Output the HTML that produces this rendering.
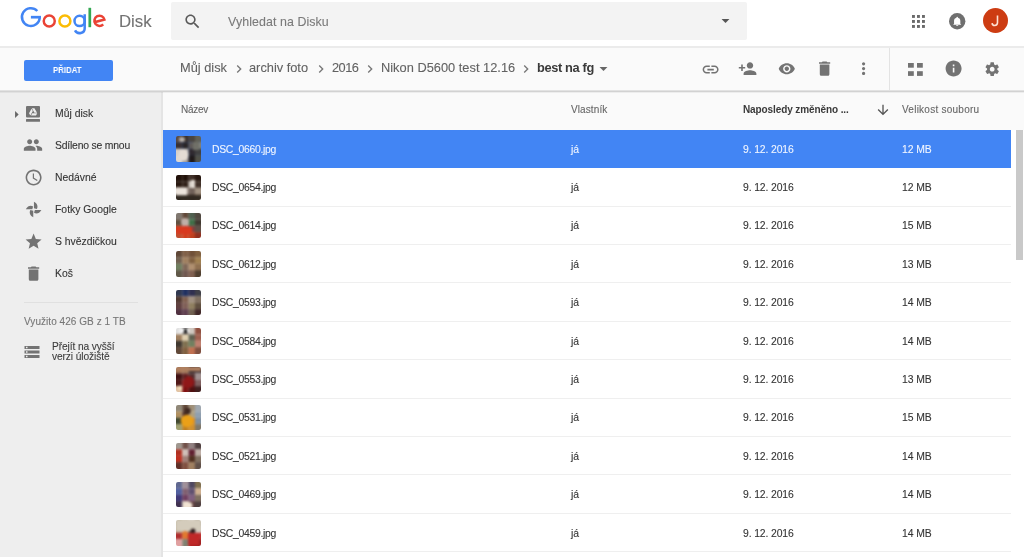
<!DOCTYPE html>
<html><head><meta charset="utf-8">
<style>
*{margin:0;padding:0;box-sizing:border-box}
html,body{width:1024px;height:557px;overflow:hidden;background:#fff;font-family:"Liberation Sans",sans-serif;-webkit-font-smoothing:antialiased}
.t{will-change:transform}
.a{position:absolute}
.t{position:absolute;white-space:nowrap;line-height:1;-webkit-text-stroke:0.1px currentColor}
svg{position:absolute;display:block;overflow:visible}
.th{position:absolute;width:25.2px;height:25.5px;border-radius:2px;overflow:hidden}
.tg{position:absolute;left:-3px;top:-3px;filter:blur(0.9px)}
</style></head><body>
<div class="a" style="left:0;top:0;width:1024px;height:46px;background:#fff"></div>
<div class="a" style="left:0;top:46px;width:1024px;height:2px;background:#ebebeb"></div>
<svg style="left:0;top:0" width="120" height="40" viewBox="0 0 120 40"><g fill="none" stroke-width="2.5"><path d="M37.3 11.0A8.9 8.9 0 1 0 39.7 17.2" stroke="#4285f4"/><path d="M30.9 17.2H41" stroke="#4285f4" stroke-width="2.7"/><circle cx="49.25" cy="20.9" r="5.5" stroke="#ea4335"/><circle cx="64.9" cy="20.9" r="5.5" stroke="#fbbc05"/><circle cx="79.6" cy="20.9" r="5.1" stroke="#4285f4"/><path d="M84.7 14.3V28.2A5.1 4.7 0 0 1 75.0 30.4" stroke="#4285f4"/><path d="M89.8 7.8V27.2" stroke="#34a853" stroke-width="2.7"/><path d="M94.4 22.2L104.4 19.5A5.1 5.1 0 1 0 103.2 24.3" stroke="#ea4335"/></g></svg>
<div class="t" style="left:118.50px;top:13.90px;font-size:16.8px;color:#737373;font-weight:normal;letter-spacing:0px;">Disk</div>

<div class="a" style="left:171px;top:2px;width:576px;height:37.5px;background:#f3f3f3;border-radius:2px"></div>
<svg style="left:183.4px;top:11.6px" width="19" height="19" viewBox="0 0 24 24"><path fill="#5a5a5a" d="M15.5 14h-.79l-.28-.27C15.41 12.59 16 11.11 16 9.5 16 5.91 13.09 3 9.5 3S3 5.91 3 9.5 5.91 16 9.5 16c1.61 0 3.09-.59 4.23-1.57l.27.28v.79l5 4.99L20.49 19l-4.99-5zm-6 0C7.01 14 5 11.99 5 9.5S7.01 5 9.5 5 14 7.01 14 9.5 11.99 14 9.5 14z"/></svg>

<div class="t" style="left:228.20px;top:15.80px;font-size:12.4px;color:#7a7a7a;font-weight:normal;letter-spacing:0.08px;">Vyhledat na Disku</div>

<svg style="left:716px;top:11px" width="19" height="19" viewBox="0 0 24 24"><path fill="#555" d="M7 10l5 5 5-5z"/></svg>

<svg style="left:912px;top:14.5px" width="13" height="13" viewBox="0 0 13 13"><g fill="#6a6a6a"><rect x="0" y="0" width="2.9" height="2.9"/><rect x="5" y="0" width="2.9" height="2.9"/><rect x="10" y="0" width="2.9" height="2.9"/><rect x="0" y="5" width="2.9" height="2.9"/><rect x="5" y="5" width="2.9" height="2.9"/><rect x="10" y="5" width="2.9" height="2.9"/><rect x="0" y="10" width="2.9" height="2.9"/><rect x="5" y="10" width="2.9" height="2.9"/><rect x="10" y="10" width="2.9" height="2.9"/></g></svg>
<svg style="left:948.8px;top:12.6px" width="16.4" height="16.4" viewBox="0 0 24 24"><circle cx="12" cy="12" r="12" fill="#6f6f6f"/><path fill="#fff" d="M12 18.8c.9 0 1.6-.6 1.6-1.4h-3.2c0 .8.7 1.4 1.6 1.4zM16.6 15.6v-4c0-2.4-1.3-4.1-3.5-4.6V6.6c0-.6-.5-1.1-1.1-1.1s-1.1.5-1.1 1.1V7c-2.2.5-3.5 2.2-3.5 4.6v4l-1.1 1.1v.5h11.4v-.5z"/></svg>
<svg style="left:982.9px;top:8.3px" width="25" height="25" viewBox="0 0 25 25"><circle cx="12.5" cy="12.5" r="12.5" fill="#cd3c12"/><path d="M14.5 7.4V14.6C14.5 16.5 13.4 17.5 11.7 17.5C10.1 17.5 9.2 16.6 9.1 15.1" fill="none" stroke="#fde2d4" stroke-width="1.6"/></svg>
<div class="a" style="left:0;top:48px;width:1024px;height:42px;background:#fafafa"></div>
<div class="a" style="left:24px;top:59.5px;width:89px;height:21px;background:#4285f4;border-radius:2px"></div>
<div class="t" style="left:52.60px;top:65.80px;font-size:9px;color:#fff;font-weight:bold;letter-spacing:0px;transform:scaleX(0.87);transform-origin:0 0;-webkit-text-stroke:0">PŘIDAT</div>

<div class="t" style="left:179.50px;top:62.40px;font-size:12.8px;color:#626262;font-weight:normal;letter-spacing:0px;">Můj disk</div>

<svg style="left:230.5px;top:61px" width="16" height="16" viewBox="0 0 24 24"><path fill="#777" d="M10 6L8.59 7.41 13.17 12l-4.58 4.59L10 18l6-6z"/></svg>

<div class="t" style="left:249.00px;top:62.40px;font-size:12.8px;color:#626262;font-weight:normal;letter-spacing:0px;">archiv foto</div>

<svg style="left:312.5px;top:61px" width="16" height="16" viewBox="0 0 24 24"><path fill="#777" d="M10 6L8.59 7.41 13.17 12l-4.58 4.59L10 18l6-6z"/></svg>

<div class="t" style="left:331.50px;top:62.40px;font-size:12.8px;color:#626262;font-weight:normal;letter-spacing:-0.5px;">2016</div>

<svg style="left:362px;top:61px" width="16" height="16" viewBox="0 0 24 24"><path fill="#777" d="M10 6L8.59 7.41 13.17 12l-4.58 4.59L10 18l6-6z"/></svg>

<div class="t" style="left:381.30px;top:62.40px;font-size:12.8px;color:#626262;font-weight:normal;letter-spacing:0.02px;">Nikon D5600 test 12.16</div>

<svg style="left:517.5px;top:61px" width="16" height="16" viewBox="0 0 24 24"><path fill="#777" d="M10 6L8.59 7.41 13.17 12l-4.58 4.59L10 18l6-6z"/></svg>

<div class="t" style="left:536.50px;top:62.40px;font-size:12.8px;color:#3a3a3a;font-weight:bold;letter-spacing:-0.35px;-webkit-text-stroke:0">best na fg</div>

<svg style="left:594px;top:59px" width="19" height="19" viewBox="0 0 24 24"><path fill="#666" d="M7 10l5 5 5-5z"/></svg>

<svg style="left:700.5px;top:59.5px" width="19.2" height="19.2" viewBox="0 0 24 24"><path fill="#737373" d="M3.9 12c0-1.71 1.39-3.1 3.1-3.1h4V7H7c-2.76 0-5 2.24-5 5s2.24 5 5 5h4v-1.9H7c-1.71 0-3.1-1.39-3.1-3.1zM8 13h8v-2H8v2zm9-6h-4v1.9h4c1.71 0 3.1 1.39 3.1 3.1s-1.39 3.1-3.1 3.1h-4V17h4c2.76 0 5-2.24 5-5s-2.24-5-5-5z"/></svg>

<svg style="left:737.6px;top:58.9px" width="19.2" height="19.2" viewBox="0 0 24 24"><path fill="#737373" d="M15 12c2.21 0 4-1.79 4-4s-1.79-4-4-4-4 1.79-4 4 1.79 4 4 4zm-9-2V7H4v3H1v2h3v3h2v-3h3v-2H6zm9 4c-2.67 0-8 1.34-8 4v2h16v-2c0-2.66-5.33-4-8-4z"/></svg>

<svg style="left:777.6px;top:59.9px" width="17.6" height="17.6" viewBox="0 0 24 24"><path fill="#737373" d="M12 4.5C7 4.5 2.73 7.61 1 12c1.73 4.39 6 7.5 11 7.5s9.27-3.11 11-7.5c-1.73-4.39-6-7.5-11-7.5zM12 17c-2.76 0-5-2.24-5-5s2.24-5 5-5 5 2.24 5 5-2.24 5-5 5zm0-8c-1.66 0-3 1.34-3 3s1.34 3 3 3 3-1.34 3-3-1.34-3-3-3z"/></svg>

<svg style="left:815px;top:58.9px" width="19.2" height="19.2" viewBox="0 0 24 24"><path fill="#737373" d="M6 19c0 1.1.9 2 2 2h8c1.1 0 2-.9 2-2V7H6v12zM19 4h-3.5l-1-1h-5l-1 1H5v2h14V4z"/></svg>

<svg style="left:854px;top:59px" width="19.2" height="19.2" viewBox="0 0 24 24"><path fill="#737373" d="M12 8c1.1 0 2-.9 2-2s-.9-2-2-2-2 .9-2 2 .9 2 2 2zm0 2c-1.1 0-2 .9-2 2s.9 2 2 2 2-.9 2-2-.9-2-2-2zm0 6c-1.1 0-2 .9-2 2s.9 2 2 2 2-.9 2-2-.9-2-2-2z"/></svg>

<div class="a" style="left:889px;top:48px;width:1px;height:41.5px;background:#e3e3e3"></div>
<svg style="left:908px;top:62.5px" width="15" height="13" viewBox="0 0 15 13"><g fill="#737373"><rect x="0" y="0" width="5.8" height="4.7"/><rect x="9" y="0" width="5.8" height="4.7"/><rect x="0" y="8.2" width="5.8" height="4.7"/><rect x="9" y="8.2" width="5.8" height="4.7"/></g></svg>
<svg style="left:944px;top:59px" width="19.2" height="19.2" viewBox="0 0 24 24"><path fill="#737373" d="M12 2C6.48 2 2 6.48 2 12s4.48 10 10 10 10-4.48 10-10S17.52 2 12 2zm1 15h-2v-6h2v6zm0-8h-2V7h2v2z"/></svg>

<svg style="left:984px;top:60.5px" width="16.4" height="16.4" viewBox="0 0 24 24"><path fill="#737373" d="M19.43 12.98c.04-.32.07-.64.07-.98s-.03-.66-.07-.98l2.11-1.65c.19-.15.24-.42.12-.64l-2-3.46c-.12-.22-.39-.3-.61-.22l-2.49 1c-.52-.4-1.08-.73-1.69-.98l-.38-2.65C14.46 2.18 14.25 2 14 2h-4c-.25 0-.46.18-.49.42l-.38 2.65c-.61.25-1.17.59-1.69.98l-2.49-1c-.23-.09-.49 0-.61.22l-2 3.46c-.13.22-.07.49.12.64l2.11 1.65c-.04.32-.07.65-.07.98s.03.66.07.98l-2.11 1.65c-.19.15-.24.42-.12.64l2 3.46c.12.22.39.3.61.22l2.49-1c.52.4 1.08.73 1.69.98l.38 2.65c.03.24.24.42.49.42h4c.25 0 .46-.18.49-.42l.38-2.65c.61-.25 1.17-.59 1.69-.98l2.49 1c.23.09.49 0 .61-.22l2-3.46c.12-.22.07-.49-.12-.64l-2.11-1.65zM12 15.5c-1.93 0-3.5-1.57-3.5-3.5s1.57-3.5 3.5-3.5 3.5 1.57 3.5 3.5-1.57 3.5-3.5 3.5z"/></svg>

<div class="a" style="left:0;top:90px;width:162px;height:467px;background:#eeeeee"></div>
<div class="a" style="left:162px;top:90px;width:862px;height:467px;background:#fff"></div>
<div class="a" style="left:162px;top:90px;width:862px;height:40px;background:#fafafa"></div>
<div class="a" style="left:161px;top:90px;width:1.5px;height:467px;background:#e4e4e4"></div>
<div class="a" style="left:0;top:90px;width:1024px;height:1px;background:#e2e2e2"></div>
<div class="a" style="left:0;top:91px;width:1024px;height:1px;background:#d2d2d2"></div>
<div class="a" style="left:0;top:92px;width:1024px;height:1px;background:rgba(0,0,0,0.05)"></div>
<svg style="left:7.5px;top:105.5px" width="17" height="17" viewBox="0 0 24 24"><path fill="#666" d="M10 17l5-5-5-5v10z"/></svg>

<svg style="left:26px;top:105.8px" width="14" height="16" viewBox="0 0 14 16"><rect x="0" y="0" width="14" height="11.6" rx="1" fill="#737373"/><rect x="0" y="13.1" width="14" height="2.6" rx="0.5" fill="#737373"/><path fill="#eee" transform="translate(2.6 1.5) scale(0.38)" d="M7.71,3.5L1.15,15L4.58,21L11.13,9.5M9.73,15L6.3,21H19.42L22.85,15M22.28,14L15.42,2H8.58L8.57,2L15.43,14H22.28Z"/></svg>
<div class="t" style="left:54.50px;top:108.80px;font-size:10.4px;color:#333;font-weight:normal;letter-spacing:0px;">Můj disk</div>

<svg style="left:22.8px;top:135px" width="20" height="20" viewBox="0 0 24 24"><path fill="#737373" d="M16 11c1.66 0 2.99-1.34 2.99-3S17.66 5 16 5c-1.66 0-3 1.34-3 3s1.34 3 3 3zm-8 0c1.66 0 2.99-1.34 2.99-3S9.66 5 8 5C6.34 5 5 6.34 5 8s1.34 3 3 3zm0 2c-2.33 0-7 1.17-7 3.5V19h14v-2.5c0-2.33-4.67-3.5-7-3.5zm8 0c-.29 0-.62.02-.97.05 1.16.84 1.97 1.97 1.97 3.45V19h6v-2.5c0-2.33-4.67-3.5-7-3.5z"/></svg>

<div class="t" style="left:54.50px;top:140.80px;font-size:10.4px;color:#333;font-weight:normal;letter-spacing:-0.2px;">Sdíleno se mnou</div>

<svg style="left:23.5px;top:167.5px" width="19.2" height="19.2" viewBox="0 0 24 24"><path fill="#737373" d="M11.99 2C6.47 2 2 6.48 2 12s4.47 10 9.99 10C17.52 22 22 17.52 22 12S17.52 2 11.99 2zM12 20c-4.42 0-8-3.58-8-8s3.58-8 8-8 8 3.58 8 8-3.58 8-8 8zm.5-13H11v6l5.25 3.15.75-1.23-4.5-2.67z"/></svg>

<div class="t" style="left:54.50px;top:172.80px;font-size:10.4px;color:#333;font-weight:normal;letter-spacing:0px;">Nedávné</div>

<svg style="left:23.5px;top:199.5px" width="19.2" height="19.2" viewBox="0 0 24 24"><g fill="#737373"><path id="pb" d="M12.4 2.3V10.4L16 11.4C17.7 8.6 17 4.6 12.4 2.3Z"/><use href="#pb" transform="rotate(90 12 12)"/><use href="#pb" transform="rotate(180 12 12)"/><use href="#pb" transform="rotate(270 12 12)"/></g></svg>

<div class="t" style="left:54.50px;top:204.80px;font-size:10.4px;color:#333;font-weight:normal;letter-spacing:0px;">Fotky Google</div>

<svg style="left:23.5px;top:231.5px" width="19.2" height="19.2" viewBox="0 0 24 24"><path fill="#737373" d="M12 17.27L18.18 21l-1.64-7.03L22 9.24l-7.19-.61L12 2 9.19 8.63 2 9.24l5.46 4.73L5.82 21z"/></svg>

<div class="t" style="left:54.50px;top:236.80px;font-size:10.4px;color:#333;font-weight:normal;letter-spacing:0px;">S hvězdičkou</div>

<svg style="left:23.5px;top:263.5px" width="19.2" height="19.2" viewBox="0 0 24 24"><path fill="#737373" d="M6 19c0 1.1.9 2 2 2h8c1.1 0 2-.9 2-2V7H6v12zM19 4h-3.5l-1-1h-5l-1 1H5v2h14V4z"/></svg>

<div class="t" style="left:54.50px;top:268.80px;font-size:10.4px;color:#333;font-weight:normal;letter-spacing:0px;">Koš</div>

<div class="a" style="left:23.5px;top:302px;width:114px;height:1px;background:#e0e0e0"></div>
<div class="t" style="left:23.50px;top:317.20px;font-size:10px;color:#767676;font-weight:normal;letter-spacing:0.05px;">Využito 426 GB z 1 TB</div>

<svg style="left:23.3px;top:343px" width="18" height="18" viewBox="0 0 24 24"><path fill="#737373" d="M2 20h20v-4H2v4zm2-3h2v2H4v-2zM2 4v4h20V4H2zm4 3H4V5h2v2zm-4 7h20v-4H2v4zm2-3h2v2H4v-2z"/></svg>

<div class="t" style="left:51.70px;top:341.50px;font-size:10.2px;color:#3c3c3c;font-weight:normal;letter-spacing:-0.1px;">Přejít na vyšší</div>

<div class="t" style="left:51.70px;top:351.50px;font-size:10.2px;color:#3c3c3c;font-weight:normal;letter-spacing:-0.1px;">verzi úložiště</div>

<div class="t" style="left:180.60px;top:104.60px;font-size:10px;color:#666;font-weight:normal;letter-spacing:-0.3px;">Název</div>

<div class="t" style="left:570.50px;top:104.60px;font-size:10px;color:#666;font-weight:normal;letter-spacing:0.1px;">Vlastník</div>

<div class="t" style="left:742.70px;top:104.60px;font-size:10px;color:#3a3a3a;font-weight:bold;letter-spacing:-0.1px;-webkit-text-stroke:0">Naposledy změněno ...</div>

<svg style="left:874.5px;top:101.5px" width="16" height="16" viewBox="0 0 24 24"><path fill="#555" d="M20 12l-1.41-1.41L13 16.17V4h-2v12.17l-5.58-5.59L4 12l8 8 8-8z"/></svg>

<div class="t" style="left:902.00px;top:104.60px;font-size:10px;color:#666;font-weight:normal;letter-spacing:0.25px;">Velikost souboru</div>

<div class="a" style="left:163px;top:129.70px;width:848px;height:38.4px;background:#4285f4"></div>
<div class="th" style="left:175.70px;top:136.10px"><svg class="tg" width="31.2" height="31.5" viewBox="0 0 31.2 31.5"><rect x="0.00" y="0.00" width="9.40" height="9.47" fill="#5a4a40"/><rect x="9.30" y="0.00" width="6.40" height="9.47" fill="#3a302a"/><rect x="15.60" y="0.00" width="6.40" height="9.47" fill="#4a4540"/><rect x="21.90" y="0.00" width="9.40" height="9.47" fill="#606058"/><rect x="0.00" y="9.38" width="9.40" height="6.47" fill="#3a3030"/><rect x="9.30" y="9.38" width="6.40" height="6.47" fill="#2a2525"/><rect x="15.60" y="9.38" width="6.40" height="6.47" fill="#605a58"/><rect x="21.90" y="9.38" width="9.40" height="6.47" fill="#808078"/><rect x="0.00" y="15.75" width="9.40" height="6.47" fill="#d8d0c8"/><rect x="9.30" y="15.75" width="6.40" height="6.47" fill="#c0b8b0"/><rect x="15.60" y="15.75" width="6.40" height="6.47" fill="#302a30"/><rect x="21.90" y="15.75" width="9.40" height="6.47" fill="#404040"/><rect x="0.00" y="22.12" width="9.40" height="9.47" fill="#e0d8d0"/><rect x="9.30" y="22.12" width="6.40" height="9.47" fill="#a09890"/><rect x="15.60" y="22.12" width="6.40" height="9.47" fill="#201a1a"/><rect x="21.90" y="22.12" width="9.40" height="9.47" fill="#505048"/><g transform="translate(3 3)"><ellipse cx="7.5" cy="19" rx="5" ry="6" fill="#e4dcd4"/><ellipse cx="6" cy="3.5" rx="3" ry="2.5" fill="#b8b0a8"/><rect x="17" y="6" width="6" height="8" fill="#707068"/></g></svg></div>
<div class="t" style="left:212.00px;top:144.50px;font-size:10.4px;color:#f0f5ff;font-weight:normal;letter-spacing:-0.3px;">DSC_0660.jpg</div>

<div class="t" style="left:570.50px;top:144.50px;font-size:10.4px;color:#f0f5ff;font-weight:normal;letter-spacing:0px;">já</div>

<div class="t" style="left:742.70px;top:144.50px;font-size:10.4px;color:#f0f5ff;font-weight:normal;letter-spacing:-0.12px;">9. 12. 2016</div>

<div class="t" style="left:902.30px;top:144.50px;font-size:10.4px;color:#f0f5ff;font-weight:normal;letter-spacing:-0.1px;">12 MB</div>

<div class="a" style="left:163px;top:206px;width:848px;height:1px;background:#efefef"></div>
<div class="th" style="left:175.70px;top:174.50px"><svg class="tg" width="31.2" height="31.5" viewBox="0 0 31.2 31.5"><rect x="0.00" y="0.00" width="9.40" height="9.47" fill="#201008"/><rect x="9.30" y="0.00" width="6.40" height="9.47" fill="#201008"/><rect x="15.60" y="0.00" width="6.40" height="9.47" fill="#403028"/><rect x="21.90" y="0.00" width="9.40" height="9.47" fill="#281810"/><rect x="0.00" y="9.38" width="9.40" height="6.47" fill="#281810"/><rect x="9.30" y="9.38" width="6.40" height="6.47" fill="#302018"/><rect x="15.60" y="9.38" width="6.40" height="6.47" fill="#d0c8c0"/><rect x="21.90" y="9.38" width="9.40" height="6.47" fill="#403028"/><rect x="0.00" y="15.75" width="9.40" height="6.47" fill="#e8e0d8"/><rect x="9.30" y="15.75" width="6.40" height="6.47" fill="#a09088"/><rect x="15.60" y="15.75" width="6.40" height="6.47" fill="#706058"/><rect x="21.90" y="15.75" width="9.40" height="6.47" fill="#a09080"/><rect x="0.00" y="22.12" width="9.40" height="9.47" fill="#302820"/><rect x="9.30" y="22.12" width="6.40" height="9.47" fill="#504038"/><rect x="15.60" y="22.12" width="6.40" height="9.47" fill="#403028"/><rect x="21.90" y="22.12" width="9.40" height="9.47" fill="#605040"/><g transform="translate(3 3)"><rect x="0" y="12.5" width="11" height="8" fill="#ece4dc"/><rect x="15" y="5" width="4" height="8" fill="#e4dcd4"/><rect x="0" y="20.5" width="25" height="5" fill="#302820"/></g></svg></div>
<div class="t" style="left:212.00px;top:182.90px;font-size:10.4px;color:#333;font-weight:normal;letter-spacing:-0.3px;">DSC_0654.jpg</div>

<div class="t" style="left:570.50px;top:182.90px;font-size:10.4px;color:#333;font-weight:normal;letter-spacing:0px;">já</div>

<div class="t" style="left:742.70px;top:182.90px;font-size:10.4px;color:#333;font-weight:normal;letter-spacing:-0.12px;">9. 12. 2016</div>

<div class="t" style="left:902.30px;top:182.90px;font-size:10.4px;color:#333;font-weight:normal;letter-spacing:-0.1px;">12 MB</div>

<div class="a" style="left:163px;top:244px;width:848px;height:1px;background:#efefef"></div>
<div class="th" style="left:175.70px;top:212.90px"><svg class="tg" width="31.2" height="31.5" viewBox="0 0 31.2 31.5"><rect x="0.00" y="0.00" width="9.40" height="9.47" fill="#807870"/><rect x="9.30" y="0.00" width="6.40" height="9.47" fill="#604838"/><rect x="15.60" y="0.00" width="6.40" height="9.47" fill="#506050"/><rect x="21.90" y="0.00" width="9.40" height="9.47" fill="#504840"/><rect x="0.00" y="9.38" width="9.40" height="6.47" fill="#605040"/><rect x="9.30" y="9.38" width="6.40" height="6.47" fill="#b0a098"/><rect x="15.60" y="9.38" width="6.40" height="6.47" fill="#407048"/><rect x="21.90" y="9.38" width="9.40" height="6.47" fill="#403830"/><rect x="0.00" y="15.75" width="9.40" height="6.47" fill="#d04020"/><rect x="9.30" y="15.75" width="6.40" height="6.47" fill="#d03020"/><rect x="15.60" y="15.75" width="6.40" height="6.47" fill="#804040"/><rect x="21.90" y="15.75" width="9.40" height="6.47" fill="#605048"/><rect x="0.00" y="22.12" width="9.40" height="9.47" fill="#c05030"/><rect x="9.30" y="22.12" width="6.40" height="9.47" fill="#d04020"/><rect x="15.60" y="22.12" width="6.40" height="9.47" fill="#c04020"/><rect x="21.90" y="22.12" width="9.40" height="9.47" fill="#903020"/><g transform="translate(3 3)"><ellipse cx="9" cy="9" rx="4" ry="4" fill="#c0b0a8"/><rect x="0" y="14" width="16" height="7" fill="#d83a20"/></g></svg></div>
<div class="t" style="left:212.00px;top:221.30px;font-size:10.4px;color:#333;font-weight:normal;letter-spacing:-0.3px;">DSC_0614.jpg</div>

<div class="t" style="left:570.50px;top:221.30px;font-size:10.4px;color:#333;font-weight:normal;letter-spacing:0px;">já</div>

<div class="t" style="left:742.70px;top:221.30px;font-size:10.4px;color:#333;font-weight:normal;letter-spacing:-0.12px;">9. 12. 2016</div>

<div class="t" style="left:902.30px;top:221.30px;font-size:10.4px;color:#333;font-weight:normal;letter-spacing:-0.1px;">15 MB</div>

<div class="a" style="left:163px;top:282px;width:848px;height:1px;background:#efefef"></div>
<div class="th" style="left:175.70px;top:251.30px"><svg class="tg" width="31.2" height="31.5" viewBox="0 0 31.2 31.5"><rect x="0.00" y="0.00" width="9.40" height="9.47" fill="#604838"/><rect x="9.30" y="0.00" width="6.40" height="9.47" fill="#806048"/><rect x="15.60" y="0.00" width="6.40" height="9.47" fill="#705038"/><rect x="21.90" y="0.00" width="9.40" height="9.47" fill="#806040"/><rect x="0.00" y="9.38" width="9.40" height="6.47" fill="#706050"/><rect x="9.30" y="9.38" width="6.40" height="6.47" fill="#a08060"/><rect x="15.60" y="9.38" width="6.40" height="6.47" fill="#806040"/><rect x="21.90" y="9.38" width="9.40" height="6.47" fill="#a08050"/><rect x="0.00" y="15.75" width="9.40" height="6.47" fill="#708060"/><rect x="9.30" y="15.75" width="6.40" height="6.47" fill="#806858"/><rect x="15.60" y="15.75" width="6.40" height="6.47" fill="#b09070"/><rect x="21.90" y="15.75" width="9.40" height="6.47" fill="#907050"/><rect x="0.00" y="22.12" width="9.40" height="9.47" fill="#605848"/><rect x="9.30" y="22.12" width="6.40" height="9.47" fill="#705850"/><rect x="15.60" y="22.12" width="6.40" height="9.47" fill="#806050"/><rect x="21.90" y="22.12" width="9.40" height="9.47" fill="#504030"/><g transform="translate(3 3)"></g></svg></div>
<div class="t" style="left:212.00px;top:259.70px;font-size:10.4px;color:#333;font-weight:normal;letter-spacing:-0.3px;">DSC_0612.jpg</div>

<div class="t" style="left:570.50px;top:259.70px;font-size:10.4px;color:#333;font-weight:normal;letter-spacing:0px;">já</div>

<div class="t" style="left:742.70px;top:259.70px;font-size:10.4px;color:#333;font-weight:normal;letter-spacing:-0.12px;">9. 12. 2016</div>

<div class="t" style="left:902.30px;top:259.70px;font-size:10.4px;color:#333;font-weight:normal;letter-spacing:-0.1px;">13 MB</div>

<div class="a" style="left:163px;top:321px;width:848px;height:1px;background:#efefef"></div>
<div class="th" style="left:175.70px;top:289.70px"><svg class="tg" width="31.2" height="31.5" viewBox="0 0 31.2 31.5"><rect x="0.00" y="0.00" width="9.40" height="9.47" fill="#303850"/><rect x="9.30" y="0.00" width="6.40" height="9.47" fill="#203060"/><rect x="15.60" y="0.00" width="6.40" height="9.47" fill="#303050"/><rect x="21.90" y="0.00" width="9.40" height="9.47" fill="#404048"/><rect x="0.00" y="9.38" width="9.40" height="6.47" fill="#503830"/><rect x="9.30" y="9.38" width="6.40" height="6.47" fill="#806050"/><rect x="15.60" y="9.38" width="6.40" height="6.47" fill="#a09080"/><rect x="21.90" y="9.38" width="9.40" height="6.47" fill="#807060"/><rect x="0.00" y="15.75" width="9.40" height="6.47" fill="#604040"/><rect x="9.30" y="15.75" width="6.40" height="6.47" fill="#806058"/><rect x="15.60" y="15.75" width="6.40" height="6.47" fill="#908060"/><rect x="21.90" y="15.75" width="9.40" height="6.47" fill="#605040"/><rect x="0.00" y="22.12" width="9.40" height="9.47" fill="#503040"/><rect x="9.30" y="22.12" width="6.40" height="9.47" fill="#604050"/><rect x="15.60" y="22.12" width="6.40" height="9.47" fill="#706050"/><rect x="21.90" y="22.12" width="9.40" height="9.47" fill="#402828"/><g transform="translate(3 3)"></g></svg></div>
<div class="t" style="left:212.00px;top:298.10px;font-size:10.4px;color:#333;font-weight:normal;letter-spacing:-0.3px;">DSC_0593.jpg</div>

<div class="t" style="left:570.50px;top:298.10px;font-size:10.4px;color:#333;font-weight:normal;letter-spacing:0px;">já</div>

<div class="t" style="left:742.70px;top:298.10px;font-size:10.4px;color:#333;font-weight:normal;letter-spacing:-0.12px;">9. 12. 2016</div>

<div class="t" style="left:902.30px;top:298.10px;font-size:10.4px;color:#333;font-weight:normal;letter-spacing:-0.1px;">14 MB</div>

<div class="a" style="left:163px;top:359px;width:848px;height:1px;background:#efefef"></div>
<div class="th" style="left:175.70px;top:328.10px"><svg class="tg" width="31.2" height="31.5" viewBox="0 0 31.2 31.5"><rect x="0.00" y="0.00" width="9.40" height="9.47" fill="#e0e0e0"/><rect x="9.30" y="0.00" width="6.40" height="9.47" fill="#302828"/><rect x="15.60" y="0.00" width="6.40" height="9.47" fill="#d0c8c0"/><rect x="21.90" y="0.00" width="9.40" height="9.47" fill="#905040"/><rect x="0.00" y="9.38" width="9.40" height="6.47" fill="#a08060"/><rect x="9.30" y="9.38" width="6.40" height="6.47" fill="#e0d0b0"/><rect x="15.60" y="9.38" width="6.40" height="6.47" fill="#606050"/><rect x="21.90" y="9.38" width="9.40" height="6.47" fill="#a06050"/><rect x="0.00" y="15.75" width="9.40" height="6.47" fill="#403830"/><rect x="9.30" y="15.75" width="6.40" height="6.47" fill="#807050"/><rect x="15.60" y="15.75" width="6.40" height="6.47" fill="#708060"/><rect x="21.90" y="15.75" width="9.40" height="6.47" fill="#c08070"/><rect x="0.00" y="22.12" width="9.40" height="9.47" fill="#604838"/><rect x="9.30" y="22.12" width="6.40" height="9.47" fill="#806040"/><rect x="15.60" y="22.12" width="6.40" height="9.47" fill="#c07050"/><rect x="21.90" y="22.12" width="9.40" height="9.47" fill="#805040"/><g transform="translate(3 3)"><rect x="3" y="0" width="10" height="5" fill="#f0f0f0"/><rect x="8" y="1" width="3" height="4" fill="#202020"/></g></svg></div>
<div class="t" style="left:212.00px;top:336.50px;font-size:10.4px;color:#333;font-weight:normal;letter-spacing:-0.3px;">DSC_0584.jpg</div>

<div class="t" style="left:570.50px;top:336.50px;font-size:10.4px;color:#333;font-weight:normal;letter-spacing:0px;">já</div>

<div class="t" style="left:742.70px;top:336.50px;font-size:10.4px;color:#333;font-weight:normal;letter-spacing:-0.12px;">9. 12. 2016</div>

<div class="t" style="left:902.30px;top:336.50px;font-size:10.4px;color:#333;font-weight:normal;letter-spacing:-0.1px;">14 MB</div>

<div class="a" style="left:163px;top:398px;width:848px;height:1px;background:#efefef"></div>
<div class="th" style="left:175.70px;top:366.50px"><svg class="tg" width="31.2" height="31.5" viewBox="0 0 31.2 31.5"><rect x="0.00" y="0.00" width="9.40" height="9.47" fill="#a07050"/><rect x="9.30" y="0.00" width="6.40" height="9.47" fill="#a07858"/><rect x="15.60" y="0.00" width="6.40" height="9.47" fill="#403030"/><rect x="21.90" y="0.00" width="9.40" height="9.47" fill="#504040"/><rect x="0.00" y="9.38" width="9.40" height="6.47" fill="#401010"/><rect x="9.30" y="9.38" width="6.40" height="6.47" fill="#602020"/><rect x="15.60" y="9.38" width="6.40" height="6.47" fill="#503030"/><rect x="21.90" y="9.38" width="9.40" height="6.47" fill="#a09090"/><rect x="0.00" y="15.75" width="9.40" height="6.47" fill="#501818"/><rect x="9.30" y="15.75" width="6.40" height="6.47" fill="#901818"/><rect x="15.60" y="15.75" width="6.40" height="6.47" fill="#601820"/><rect x="21.90" y="15.75" width="9.40" height="6.47" fill="#806060"/><rect x="0.00" y="22.12" width="9.40" height="9.47" fill="#e0c0a0"/><rect x="9.30" y="22.12" width="6.40" height="9.47" fill="#801010"/><rect x="15.60" y="22.12" width="6.40" height="9.47" fill="#501010"/><rect x="21.90" y="22.12" width="9.40" height="9.47" fill="#402020"/><g transform="translate(3 3)"><rect x="0" y="0" width="25" height="4" fill="#b08060"/><circle cx="4" cy="21" r="2.4" fill="#f4dcb8"/><ellipse cx="13" cy="15" rx="5" ry="6" fill="#901818"/></g></svg></div>
<div class="t" style="left:212.00px;top:374.90px;font-size:10.4px;color:#333;font-weight:normal;letter-spacing:-0.3px;">DSC_0553.jpg</div>

<div class="t" style="left:570.50px;top:374.90px;font-size:10.4px;color:#333;font-weight:normal;letter-spacing:0px;">já</div>

<div class="t" style="left:742.70px;top:374.90px;font-size:10.4px;color:#333;font-weight:normal;letter-spacing:-0.12px;">9. 12. 2016</div>

<div class="t" style="left:902.30px;top:374.90px;font-size:10.4px;color:#333;font-weight:normal;letter-spacing:-0.1px;">13 MB</div>

<div class="a" style="left:163px;top:436px;width:848px;height:1px;background:#efefef"></div>
<div class="th" style="left:175.70px;top:404.90px"><svg class="tg" width="31.2" height="31.5" viewBox="0 0 31.2 31.5"><rect x="0.00" y="0.00" width="9.40" height="9.47" fill="#908878"/><rect x="9.30" y="0.00" width="6.40" height="9.47" fill="#604838"/><rect x="15.60" y="0.00" width="6.40" height="9.47" fill="#a09078"/><rect x="21.90" y="0.00" width="9.40" height="9.47" fill="#a0a8b0"/><rect x="0.00" y="9.38" width="9.40" height="6.47" fill="#b09060"/><rect x="9.30" y="9.38" width="6.40" height="6.47" fill="#503028"/><rect x="15.60" y="9.38" width="6.40" height="6.47" fill="#b0a080"/><rect x="21.90" y="9.38" width="9.40" height="6.47" fill="#90a0b0"/><rect x="0.00" y="15.75" width="9.40" height="6.47" fill="#404830"/><rect x="9.30" y="15.75" width="6.40" height="6.47" fill="#e0a020"/><rect x="15.60" y="15.75" width="6.40" height="6.47" fill="#e09020"/><rect x="21.90" y="15.75" width="9.40" height="6.47" fill="#8090a0"/><rect x="0.00" y="22.12" width="9.40" height="9.47" fill="#a0a070"/><rect x="9.30" y="22.12" width="6.40" height="9.47" fill="#c08020"/><rect x="15.60" y="22.12" width="6.40" height="9.47" fill="#d09030"/><rect x="21.90" y="22.12" width="9.40" height="9.47" fill="#807868"/><g transform="translate(3 3)"><circle cx="11" cy="16" r="6.2" fill="#eaa018"/><circle cx="11.5" cy="6" r="3.2" fill="#402820"/></g></svg></div>
<div class="t" style="left:212.00px;top:413.30px;font-size:10.4px;color:#333;font-weight:normal;letter-spacing:-0.3px;">DSC_0531.jpg</div>

<div class="t" style="left:570.50px;top:413.30px;font-size:10.4px;color:#333;font-weight:normal;letter-spacing:0px;">já</div>

<div class="t" style="left:742.70px;top:413.30px;font-size:10.4px;color:#333;font-weight:normal;letter-spacing:-0.12px;">9. 12. 2016</div>

<div class="t" style="left:902.30px;top:413.30px;font-size:10.4px;color:#333;font-weight:normal;letter-spacing:-0.1px;">15 MB</div>

<div class="a" style="left:163px;top:474px;width:848px;height:1px;background:#efefef"></div>
<div class="th" style="left:175.70px;top:443.30px"><svg class="tg" width="31.2" height="31.5" viewBox="0 0 31.2 31.5"><rect x="0.00" y="0.00" width="9.40" height="9.47" fill="#a09890"/><rect x="9.30" y="0.00" width="6.40" height="9.47" fill="#705048"/><rect x="15.60" y="0.00" width="6.40" height="9.47" fill="#908080"/><rect x="21.90" y="0.00" width="9.40" height="9.47" fill="#504040"/><rect x="0.00" y="9.38" width="9.40" height="6.47" fill="#b03020"/><rect x="9.30" y="9.38" width="6.40" height="6.47" fill="#d0c0b8"/><rect x="15.60" y="9.38" width="6.40" height="6.47" fill="#602030"/><rect x="21.90" y="9.38" width="9.40" height="6.47" fill="#c0b0a8"/><rect x="0.00" y="15.75" width="9.40" height="6.47" fill="#c03020"/><rect x="9.30" y="15.75" width="6.40" height="6.47" fill="#a08078"/><rect x="15.60" y="15.75" width="6.40" height="6.47" fill="#503020"/><rect x="21.90" y="15.75" width="9.40" height="6.47" fill="#807060"/><rect x="0.00" y="22.12" width="9.40" height="9.47" fill="#603028"/><rect x="9.30" y="22.12" width="6.40" height="9.47" fill="#805040"/><rect x="15.60" y="22.12" width="6.40" height="9.47" fill="#a08060"/><rect x="21.90" y="22.12" width="9.40" height="9.47" fill="#605048"/><g transform="translate(3 3)"></g></svg></div>
<div class="t" style="left:212.00px;top:451.70px;font-size:10.4px;color:#333;font-weight:normal;letter-spacing:-0.3px;">DSC_0521.jpg</div>

<div class="t" style="left:570.50px;top:451.70px;font-size:10.4px;color:#333;font-weight:normal;letter-spacing:0px;">já</div>

<div class="t" style="left:742.70px;top:451.70px;font-size:10.4px;color:#333;font-weight:normal;letter-spacing:-0.12px;">9. 12. 2016</div>

<div class="t" style="left:902.30px;top:451.70px;font-size:10.4px;color:#333;font-weight:normal;letter-spacing:-0.1px;">14 MB</div>

<div class="a" style="left:163px;top:513px;width:848px;height:1px;background:#efefef"></div>
<div class="th" style="left:175.70px;top:481.70px"><svg class="tg" width="31.2" height="31.5" viewBox="0 0 31.2 31.5"><rect x="0.00" y="0.00" width="9.40" height="9.47" fill="#606890"/><rect x="9.30" y="0.00" width="6.40" height="9.47" fill="#a09098"/><rect x="15.60" y="0.00" width="6.40" height="9.47" fill="#504860"/><rect x="21.90" y="0.00" width="9.40" height="9.47" fill="#807050"/><rect x="0.00" y="9.38" width="9.40" height="6.47" fill="#5060a0"/><rect x="9.30" y="9.38" width="6.40" height="6.47" fill="#806070"/><rect x="15.60" y="9.38" width="6.40" height="6.47" fill="#605070"/><rect x="21.90" y="9.38" width="9.40" height="6.47" fill="#d0b090"/><rect x="0.00" y="15.75" width="9.40" height="6.47" fill="#403878"/><rect x="9.30" y="15.75" width="6.40" height="6.47" fill="#704060"/><rect x="15.60" y="15.75" width="6.40" height="6.47" fill="#806080"/><rect x="21.90" y="15.75" width="9.40" height="6.47" fill="#807060"/><rect x="0.00" y="22.12" width="9.40" height="9.47" fill="#403050"/><rect x="9.30" y="22.12" width="6.40" height="9.47" fill="#e0d0c0"/><rect x="15.60" y="22.12" width="6.40" height="9.47" fill="#604040"/><rect x="21.90" y="22.12" width="9.40" height="9.47" fill="#504040"/><g transform="translate(3 3)"><ellipse cx="12" cy="23.5" rx="4.5" ry="3.5" fill="#f2e4d4"/></g></svg></div>
<div class="t" style="left:212.00px;top:490.10px;font-size:10.4px;color:#333;font-weight:normal;letter-spacing:-0.3px;">DSC_0469.jpg</div>

<div class="t" style="left:570.50px;top:490.10px;font-size:10.4px;color:#333;font-weight:normal;letter-spacing:0px;">já</div>

<div class="t" style="left:742.70px;top:490.10px;font-size:10.4px;color:#333;font-weight:normal;letter-spacing:-0.12px;">9. 12. 2016</div>

<div class="t" style="left:902.30px;top:490.10px;font-size:10.4px;color:#333;font-weight:normal;letter-spacing:-0.1px;">14 MB</div>

<div class="a" style="left:163px;top:551px;width:848px;height:1px;background:#efefef"></div>
<div class="th" style="left:175.70px;top:520.10px"><svg class="tg" width="31.2" height="31.5" viewBox="0 0 31.2 31.5"><rect x="0.00" y="0.00" width="9.40" height="9.47" fill="#c0b8a0"/><rect x="9.30" y="0.00" width="6.40" height="9.47" fill="#d0c8b8"/><rect x="15.60" y="0.00" width="6.40" height="9.47" fill="#e0d8d0"/><rect x="21.90" y="0.00" width="9.40" height="9.47" fill="#c0b8a8"/><rect x="0.00" y="9.38" width="9.40" height="6.47" fill="#c0b098"/><rect x="9.30" y="9.38" width="6.40" height="6.47" fill="#c8b8a0"/><rect x="15.60" y="9.38" width="6.40" height="6.47" fill="#403030"/><rect x="21.90" y="9.38" width="9.40" height="6.47" fill="#d0c8c0"/><rect x="0.00" y="15.75" width="9.40" height="6.47" fill="#b03030"/><rect x="9.30" y="15.75" width="6.40" height="6.47" fill="#e07030"/><rect x="15.60" y="15.75" width="6.40" height="6.47" fill="#d03030"/><rect x="21.90" y="15.75" width="9.40" height="6.47" fill="#c03030"/><rect x="0.00" y="22.12" width="9.40" height="9.47" fill="#e0a0a0"/><rect x="9.30" y="22.12" width="6.40" height="9.47" fill="#808070"/><rect x="15.60" y="22.12" width="6.40" height="9.47" fill="#b02020"/><rect x="21.90" y="22.12" width="9.40" height="9.47" fill="#a02020"/><g transform="translate(3 3)"><rect x="0" y="0" width="25" height="11" fill="#d4ccbc"/><circle cx="17" cy="11" r="2.5" fill="#302020"/><rect x="12" y="13" width="11" height="12" fill="#c02828"/><circle cx="9" cy="14" r="3" fill="#e07a30"/></g></svg></div>
<div class="t" style="left:212.00px;top:528.50px;font-size:10.4px;color:#333;font-weight:normal;letter-spacing:-0.3px;">DSC_0459.jpg</div>

<div class="t" style="left:570.50px;top:528.50px;font-size:10.4px;color:#333;font-weight:normal;letter-spacing:0px;">já</div>

<div class="t" style="left:742.70px;top:528.50px;font-size:10.4px;color:#333;font-weight:normal;letter-spacing:-0.12px;">9. 12. 2016</div>

<div class="t" style="left:902.30px;top:528.50px;font-size:10.4px;color:#333;font-weight:normal;letter-spacing:-0.1px;">14 MB</div>

<div class="a" style="left:1016px;top:130px;width:7px;height:130px;background:#c9c9c9"></div>
</body></html>
